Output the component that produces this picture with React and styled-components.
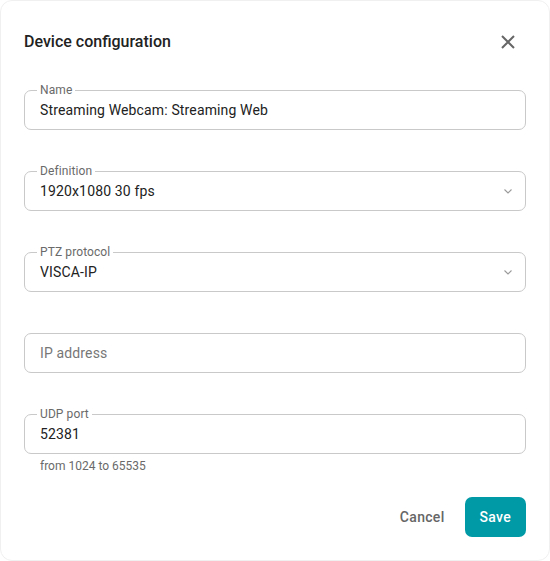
import React from "react";
import styled, { createGlobalStyle } from "styled-components";

const Global = createGlobalStyle`
  html, body { margin: 0; padding: 0; background: #fff; }
  body { font-family: Roboto, "Noto Sans", sans-serif; }
  * { box-sizing: border-box; }
`;

const Dialog = styled.div`
  width: 550px;
  height: 561px;
  background: #fff;
  border: 1px solid #f0f0f0;
  border-radius: 12px;
  padding: 0 23px;
  display: flex;
  flex-direction: column;
`;

const Header = styled.div`
  height: 82px;
  display: flex;
  align-items: center;
  justify-content: space-between;
  margin-bottom: 7px;
`;

const Title = styled.h2`
  margin: 0;
  font-size: 16px;
  font-weight: 500;
  color: #222;
  line-height: 24px;
`;

const CloseButton = styled.button`
  border: none;
  background: none;
  padding: 0;
  width: 24px;
  height: 24px;
  display: flex;
  align-items: center;
  justify-content: center;
  margin-right: 6px;
  cursor: pointer;
`;

const Fields = styled.div`
  display: flex;
  flex-direction: column;
  gap: 41px;
`;

const Field = styled.div`
  position: relative;
  height: 40px;
  border: 1px solid #c9c9c9;
  border-radius: 7px;
  padding: 0 15px;
  display: flex;
  align-items: center;
  justify-content: space-between;
`;

const FieldLabel = styled.span`
  position: absolute;
  top: -8px;
  left: 12px;
  padding: 0 3px;
  background: #fff;
  font-size: 12px;
  line-height: 14px;
  letter-spacing: 0.1px;
  color: #6a6a6a;
`;

const Value = styled.span`
  font-size: 14px;
  letter-spacing: 0.14px;
  color: ${(p) => (p.$placeholder ? "#777" : "#222")};
  line-height: 20px;
`;

const Helper = styled.div`
  margin-top: 4px;
  padding-left: 16px;
  font-size: 12px;
  line-height: 16px;
  color: #6a6a6a;
`;

const Footer = styled.div`
  margin-top: 23px;
  display: flex;
  justify-content: flex-end;
  align-items: center;
  gap: 8px;
`;

const Button = styled.button`
  height: 40px;
  border: none;
  border-radius: 7px;
  padding: 0 ${(p) => (p.$primary ? "15px" : "12px")};
  font-family: Roboto, "Noto Sans", sans-serif;
  font-size: 14px;
  font-weight: 500;
  letter-spacing: 0.3px;
  background: ${(p) => (p.$primary ? "#0099a6" : "transparent")};
  color: ${(p) => (p.$primary ? "#fff" : "#666")};
  cursor: pointer;
`;

const Chevron = () => (
  <svg width="12" height="12" viewBox="0 0 12 12" style={{ marginRight: -4 }}>
    <path d="M2.5 4.5 L6 8 L9.5 4.5" fill="none" stroke="#9a9a9a" strokeWidth="1.1" />
  </svg>
);

const TextField = ({ label, value, placeholder, select }) => (
  <Field>
    {label && <FieldLabel>{label}</FieldLabel>}
    <Value $placeholder={!value}>{value || placeholder}</Value>
    {select && <Chevron />}
  </Field>
);

export default function App() {
  return (
    <>
      <Global />
      <Dialog>
        <Header>
          <Title>Device configuration</Title>
          <CloseButton aria-label="close">
            <svg width="14" height="14" viewBox="0 0 14 14">
              <path d="M1 1 L13 13 M13 1 L1 13" stroke="#666" strokeWidth="2" />
            </svg>
          </CloseButton>
        </Header>
        <Fields>
          <TextField label="Name" value="Streaming Webcam: Streaming Web" />
          <TextField label="Definition" value="1920x1080 30 fps" select />
          <TextField label="PTZ protocol" value="VISCA-IP" select />
          <TextField placeholder="IP address" />
          <TextField label="UDP port" value="52381" />
        </Fields>
        <Helper>from 1024 to 65535</Helper>
        <Footer>
          <Button>Cancel</Button>
          <Button $primary>Save</Button>
        </Footer>
      </Dialog>
    </>
  );
}
